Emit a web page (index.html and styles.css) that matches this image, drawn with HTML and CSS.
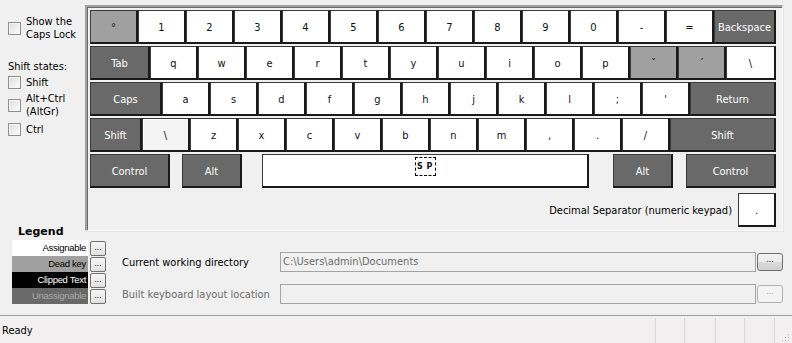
FILE: index.html
```html
<!DOCTYPE html>
<html>
<head>
<meta charset="utf-8">
<link rel="stylesheet" href="styles.css">
</head>
<body>
<div class="app">
  <div class="top">
    <div class="side">
      <label class="chk two first"><span class="box"></span><span class="lbl">Show the<br>Caps Lock</span></label>
      <div class="states-title">Shift states:</div>
      <label class="chk shift"><span class="box"></span><span class="lbl">Shift</span></label>
      <label class="chk two altgr"><span class="box"></span><span class="lbl">Alt+Ctrl<br>(AltGr)</span></label>
      <label class="chk ctrl"><span class="box"></span><span class="lbl">Ctrl</span></label>
      <div class="legend-title">Legend</div>
    </div>
    <div class="kbd">
      <div class="row">
        <div class="key dead">°</div>
        <div class="key">1</div><div class="key">2</div><div class="key">3</div><div class="key">4</div>
        <div class="key">5</div><div class="key">6</div><div class="key">7</div><div class="key">8</div>
        <div class="key">9</div><div class="key">0</div><div class="key">-</div><div class="key">=</div>
        <div class="key mod w62">Backspace</div>
      </div>
      <div class="row">
        <div class="key mod w60">Tab</div>
        <div class="key">q</div><div class="key">w</div><div class="key">e</div><div class="key">r</div>
        <div class="key">t</div><div class="key">y</div><div class="key">u</div><div class="key">i</div>
        <div class="key">o</div><div class="key">p</div><div class="key dead">ˇ</div><div class="key dead">´</div>
        <div class="key w50">\</div>
      </div>
      <div class="row">
        <div class="key mod w72">Caps</div>
        <div class="key">a</div><div class="key">s</div><div class="key">d</div><div class="key">f</div>
        <div class="key">g</div><div class="key">h</div><div class="key">j</div><div class="key">k</div>
        <div class="key">l</div><div class="key">;</div><div class="key">'</div>
        <div class="key mod w86">Return</div>
      </div>
      <div class="row">
        <div class="key mod w52">Shift</div>
        <div class="key light">\</div><div class="key">z</div><div class="key">x</div><div class="key">c</div>
        <div class="key">v</div><div class="key">b</div><div class="key">n</div><div class="key">m</div>
        <div class="key">,</div><div class="key">.</div><div class="key">/</div>
        <div class="key mod w106">Shift</div>
      </div>
      <div class="row">
        <div class="key mod w80">Control</div>
        <div class="key mod w60 gap12">Alt</div>
        <div class="key space gap20"><span class="sp">S P</span></div>
        <div class="key mod w60 gap24">Alt</div>
        <div class="key mod w90 gap13">Control</div>
      </div>
      <div class="dec-row">
        <span class="dec-label">Decimal Separator (numeric keypad)</span>
        <div class="key w38">.</div>
      </div>
    </div>
  </div>
  <div class="bottom">
    <div class="legend">
      <div class="leg-row"><span class="swatch assign">Assignable</span><span class="mini">...</span></div>
      <div class="leg-row"><span class="swatch deadk">Dead key</span><span class="mini">...</span></div>
      <div class="leg-row"><span class="swatch clip">Clipped Text</span><span class="mini">...</span></div>
      <div class="leg-row"><span class="swatch unassign">Unassignable</span><span class="mini">...</span></div>
    </div>
    <div class="paths">
      <div class="path-row">
        <span class="plabel">Current working directory</span>
        <div class="input">C:\Users\admin\Documents</div>
        <span class="btn">...</span>
      </div>
      <div class="path-row disabled">
        <span class="plabel">Built keyboard layout location</span>
        <div class="input"></div>
        <span class="btn">...</span>
      </div>
    </div>
  </div>
  <div class="status">
    <div class="pane main-pane">Ready</div>
    <div class="pane w29"></div>
    <div class="pane w31"></div>
    <div class="pane w29"></div>
    <div class="pane w30"></div>
    <div class="pane grip-pane"><span class="grip"></span></div>
  </div>
</div>
</body>
</html>
```

FILE: styles.css
```css
* { box-sizing: border-box; }
html, body { margin: 0; padding: 0; }
body {
  background: #f0f0f0;
  font-family: "DejaVu Sans", sans-serif;
  font-stretch: condensed;
  font-size: 11px;
  color: #000;
}
.app { width: 792px; height: 343px; display: flex; flex-direction: column; overflow: hidden; }

.top { display: flex; height: 237px; }
.side { width: 85px; display: flex; flex-direction: column; padding-top: 15px; line-height: 13px; }
.chk { display: flex; align-items: center; padding-left: 8px; }
.chk .lbl { margin-left: 5px; }
.box {
  width: 13px; height: 13px; flex: none;
  border: 1px solid #8e8f8f;
  background: linear-gradient(135deg, #dcdcdc 0%, #f4f4f4 70%, #fdfdfd 100%);
  box-shadow: inset 0 0 0 1px #f4f4f4;
}
.states-title { margin-top: 19px; padding-left: 8px; }
.chk.shift { margin-top: 3px; }
.chk.altgr { margin-top: 3px; }
.chk.ctrl { margin-top: 5px; }
.legend-title { margin-top: auto; padding-left: 18px; font-weight: bold; font-stretch: normal; margin-bottom: -1px; }

.kbd {
  width: 698px; height: 226px; margin-top: 5px;
  border-top: 2px solid #a0a0a0; border-left: 2px solid #a0a0a0;
  border-right: 1px solid #fff; border-bottom: 1px solid #fff;
  box-shadow: inset 1px 1px 0 #696969, 1px 1px 0 #e3e3e3;
  padding: 3px 0 0 3px;
}
.row { display: flex; width: 686px; height: 34px; margin-bottom: 2px; }
.key {
  width: 48px; height: 34px; flex: none;
  background: #fff;
  border: 1px solid #1a1a1a; border-right-width: 2px; border-bottom-width: 2px;
  border-left-color: #3a3a3a; border-top-color: #3a3a3a;
  display: flex; align-items: center; justify-content: center;
  padding-top: 2px;
  font-size: 11px; color: #111;
}
.key.mod { background: #696969; color: #fff; }
.key.dead { background: #a0a0a0; }
.key.light { background: #f4f4f4; box-shadow: inset 1px 1px 0 #fff; }
.w38 { width: 38px; }
.w50 { width: 50px; }
.w52 { width: 52px; }
.w60 { width: 60px; }
.w62 { width: 62px; }
.w72 { width: 72px; }
.w80 { width: 80px; }
.w86 { width: 86px; }
.w90 { width: 90px; }
.w106 { width: 106px; }
.gap12 { margin-left: 12px; }
.gap20 { margin-left: 20px; }
.gap24 { margin-left: 24px; }
.gap13 { margin-left: 13px; }
.key.space { width: 327px; align-items: flex-start; padding-top: 2px; }
.sp {
  border: 1px dashed #000; width: 21px; height: 19px;
  display: flex; align-items: center; justify-content: center;
  font-size: 8px; font-weight: bold; font-stretch: normal; letter-spacing: 0.5px;
}
.dec-row { display: flex; width: 686px; justify-content: flex-end; align-items: center; margin-top: 5px; height: 34px; }
.dec-label { margin-right: 6px; }

.bottom { display: flex; height: 78px; }
.legend { width: 110px; padding: 3px 0 0 12px; }
.leg-row { display: flex; height: 16px; align-items: center; }
.swatch {
  width: 76px; height: 16px; text-align: right; padding-right: 2px;
  font-family: "Liberation Sans", sans-serif; font-size: 9.5px; letter-spacing: -0.3px; line-height: 16px;
}
.swatch.assign { background: #fff; color: #000; }
.swatch.deadk { background: #a0a0a0; color: #000; }
.swatch.clip { background: #000; color: #fff; }
.swatch.unassign { background: #696969; color: #a8a8a8; }
.mini {
  width: 16px; height: 15px; margin-left: 2px;
  border: 1px solid #707070; border-radius: 2px;
  background: linear-gradient(#f6f6f6, #e2e2e2);
  font-size: 8px; line-height: 11px; text-align: center; color: #000;
}
.paths { flex: 1; padding: 15px 0 0 12px; display: flex; flex-direction: column; gap: 12px; }
.path-row { display: flex; align-items: center; height: 20px; }
.plabel { width: 158px; color: #000; }
.input {
  width: 476px; height: 20px;
  border: 1px solid #a4a4a4; background: #f0f0f0;
  color: #6d6d6d; padding-left: 2px; line-height: 18px;
}
.btn {
  width: 26px; height: 18px; margin-left: 1px;
  border: 1px solid #707070; border-radius: 3px;
  background: linear-gradient(#f2f2f2 0%, #ebebeb 50%, #dddddd 51%, #cfcfcf 100%);
  font-size: 8px; line-height: 12px; text-align: center; color: #000;
}
.disabled .plabel { color: #6d6d6d; }
.disabled .btn { border-color: #adb2b5; background: #f4f4f4; color: #9a9a9a; }

.status {
  display: flex; height: 28px;
  border-top: 1px solid #a0a0a0;
  background: #f1efef;
}
.pane { height: 100%; border-left: 1px solid #d8d8d8; margin-top: 2px; }
.main-pane { flex: 1; border-left: none; padding: 6px 0 0 2px; }
.w29 { width: 29px; }
.w31 { width: 31px; }
.w30 { width: 30px; }
.grip-pane { width: 18px; position: relative; }
.grip {
  position: absolute; right: 3px; bottom: 4px; width: 8px; height: 8px;
  background:
    radial-gradient(circle, #b0b0b0 0.8px, transparent 1px) 0 0 / 3px 3px;
  clip-path: polygon(100% 0, 100% 100%, 0 100%);
}
```
